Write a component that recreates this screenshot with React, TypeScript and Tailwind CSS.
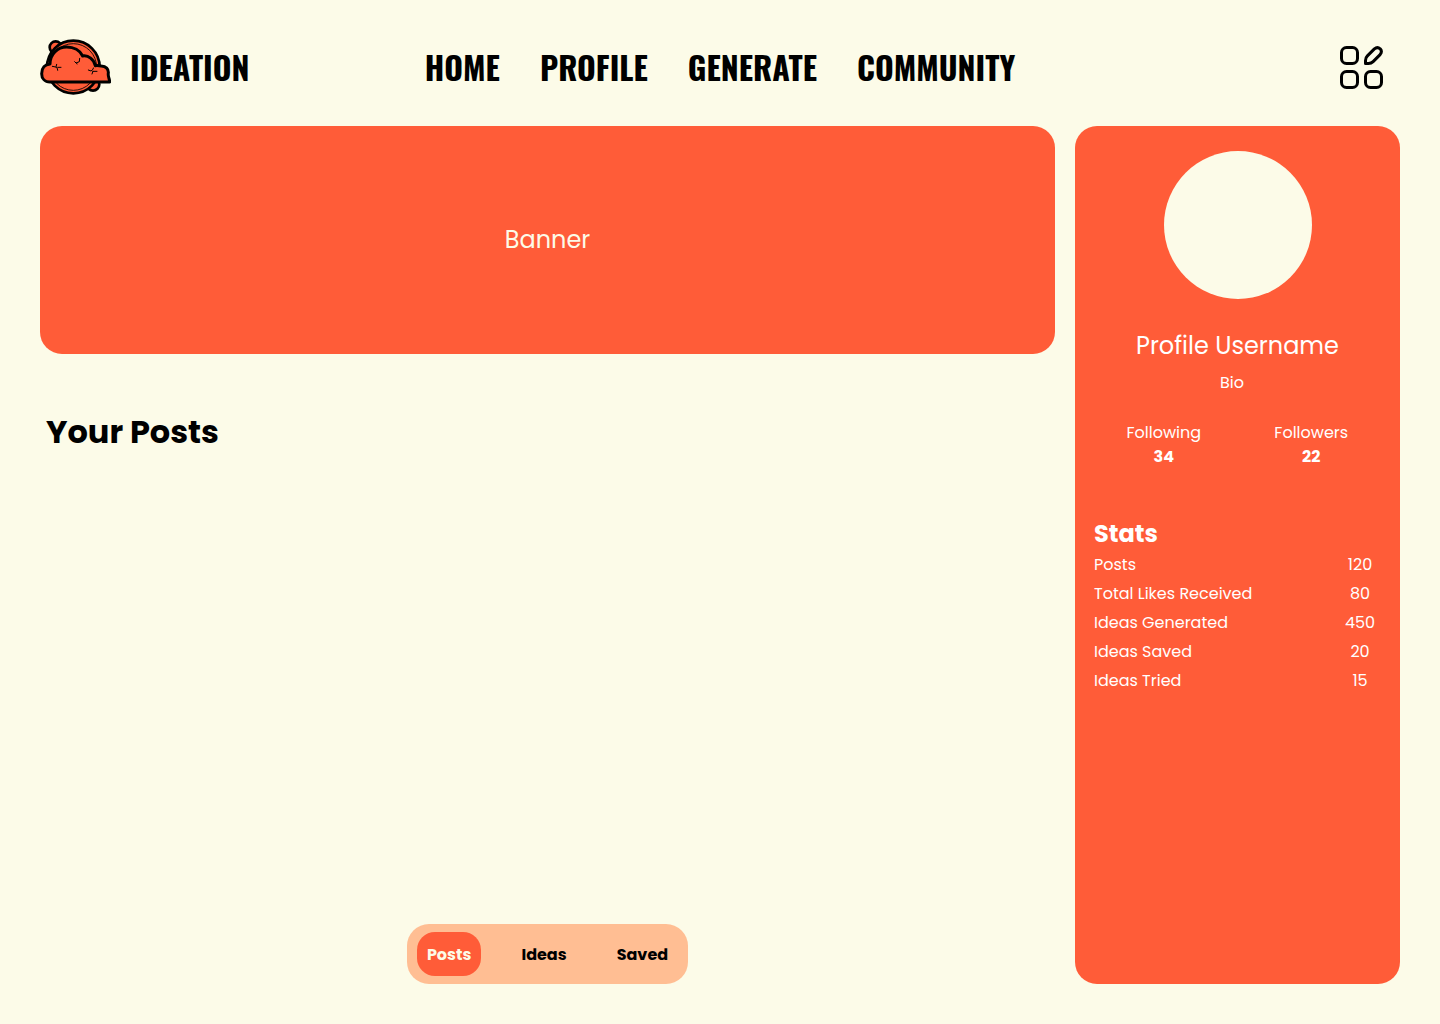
import { useState } from "react";

const links = ["HOME", "PROFILE", "GENERATE", "COMMUNITY"];
const stats: [string, number][] = [
  ["Posts", 120],
  ["Total Likes Received", 80],
  ["Ideas Generated", 450],
  ["Ideas Saved", 20],
  ["Ideas Tried", 15],
];
const tabs = ["Posts", "Ideas", "Saved"];

function Logo() {
  return (
    <svg viewBox="30 27 213 168" className="h-14 w-[71px] shrink-0" fill="#ff5c38" stroke="#000" strokeLinejoin="round" strokeLinecap="round" aria-hidden="true">
      <circle cx="77" cy="52" r="18" strokeWidth="8" />
      <circle cx="189" cy="163" r="19" strokeWidth="8" />
      <circle cx="130" cy="111" r="79" strokeWidth="8" />
      <circle cx="130" cy="111" r="70" strokeWidth="2.5" />
      <path
        d="M60 156C44 156 35 145 35 131C35 114 45 103 60 102C60 73 82 51 110 51C131 51 150 61 158 78C175 75 192 88 196 107C202 106 208 107 214 108C228 109 236 117 235 129C233 139 239 147 239 156Z"
        strokeWidth="9"
      />
      <path
        d="M67 109L77 111L82 115L83 121M78 111L80 103M83 112L93 112M134 95L138 99L148 95L149 85M140 100L141 102M175 120L183 123L189 118L190 114M189 124L201 124M189 124L186 132"
        fill="none"
        strokeWidth="3"
      />
    </svg>
  );
}

function GridPenIcon() {
  return (
    <svg viewBox="0 0 43 43" className="size-[43px]" fill="none" stroke="#000" strokeWidth="3" strokeLinejoin="round" aria-hidden="true">
      <rect x="1.5" y="1.5" width="16" height="16" rx="5" />
      <rect x="1.5" y="25.5" width="16" height="16" rx="5" />
      <rect x="25.5" y="25.5" width="16" height="16" rx="5" />
      <path d="M25.5 17.5V14.5Q25.5 11.8 27.4 9.9L34.4 2.9Q37.4 .4 40.2 2.8Q42.6 5.6 40.1 8.6L33.1 15.6Q31.2 17.5 28.5 17.5Z" />
    </svg>
  );
}

export default function App() {
  const [active, setActive] = useState("Posts");

  return (
    <div className="flex min-h-screen flex-col bg-[#fcfbe8] px-10 pb-10 font-['Poppins','Inter',sans-serif] text-base leading-6 text-black">
      <header className="grid grid-cols-[1fr_auto_1fr] items-center pt-[35px] pb-[27px] font-['Oswald','Roboto_Condensed','Liberation_Sans_Narrow',sans-serif] text-[32px] leading-[64px] font-bold">
        <a href="#" className="flex items-center gap-[19px]">
          <Logo />
          IDEATION
        </a>
        <nav className="flex gap-10">
          {links.map((link) => (
            <a key={link} href="#">
              {link}
            </a>
          ))}
        </nav>
        <button aria-label="Menu" className="mr-[17px] justify-self-end">
          <GridPenIcon />
        </button>
      </header>

      <div className="grid grow grid-cols-[1fr_325px] gap-5">
        <main className="flex flex-col">
          <section className="flex h-[228px] items-center justify-center rounded-[22px] bg-[#ff5c38] text-2xl text-[#fcfbe8]">
            Banner
          </section>
          <h1 className="mt-[54px] pl-[6px] text-[32px] leading-12 font-bold">Your Posts</h1>
          <div role="tablist" aria-label="Your content" className="mt-auto flex h-[60px] items-center gap-[30px] self-center rounded-[22px] bg-[#ffbe93] px-[10px] font-bold">
            {tabs.map((tab) => (
              <button
                key={tab}
                role="tab"
                aria-selected={active === tab}
                onClick={() => setActive(tab)}
                className={
                  active === tab
                    ? "h-11 rounded-[18px] bg-[#ff5c38] px-[10px] pt-px text-[#fcfbe8]"
                    : "h-11 rounded-[18px] px-[10px] pt-px"
                }
              >
                {tab}
              </button>
            ))}
          </div>
        </main>

        <aside className="rounded-[22px] bg-[#ff5c38] pt-[25px] text-white">
          <div className="mx-auto size-[148px] rounded-full bg-[#fcfbe8]" />
          <h2 className="mt-[29px] text-center text-2xl leading-9">Profile Username</h2>
          <p className="mt-[7px] pr-[11px] text-center">Bio</p>
          <dl className="mt-[26px] grid grid-cols-2 px-[15px] text-center">
            <div>
              <dt>Following</dt>
              <dd className="font-bold">34</dd>
            </div>
            <div>
              <dt>Followers</dt>
              <dd className="font-bold">22</dd>
            </div>
          </dl>
          <section className="mt-[47px] pr-6 pl-[19px]">
            <h3 id="stats" className="text-2xl leading-9 font-bold">
              Stats
            </h3>
            <table aria-labelledby="stats" className="mt-px w-full">
              <tbody>
                {stats.map(([label, value]) => (
                  <tr key={label}>
                    <th scope="row" className="pb-[5px] text-left font-normal">
                      {label}
                    </th>
                    <td className="w-8 pb-[5px] text-center">{value}</td>
                  </tr>
                ))}
              </tbody>
            </table>
          </section>
        </aside>
      </div>
    </div>
  );
}
